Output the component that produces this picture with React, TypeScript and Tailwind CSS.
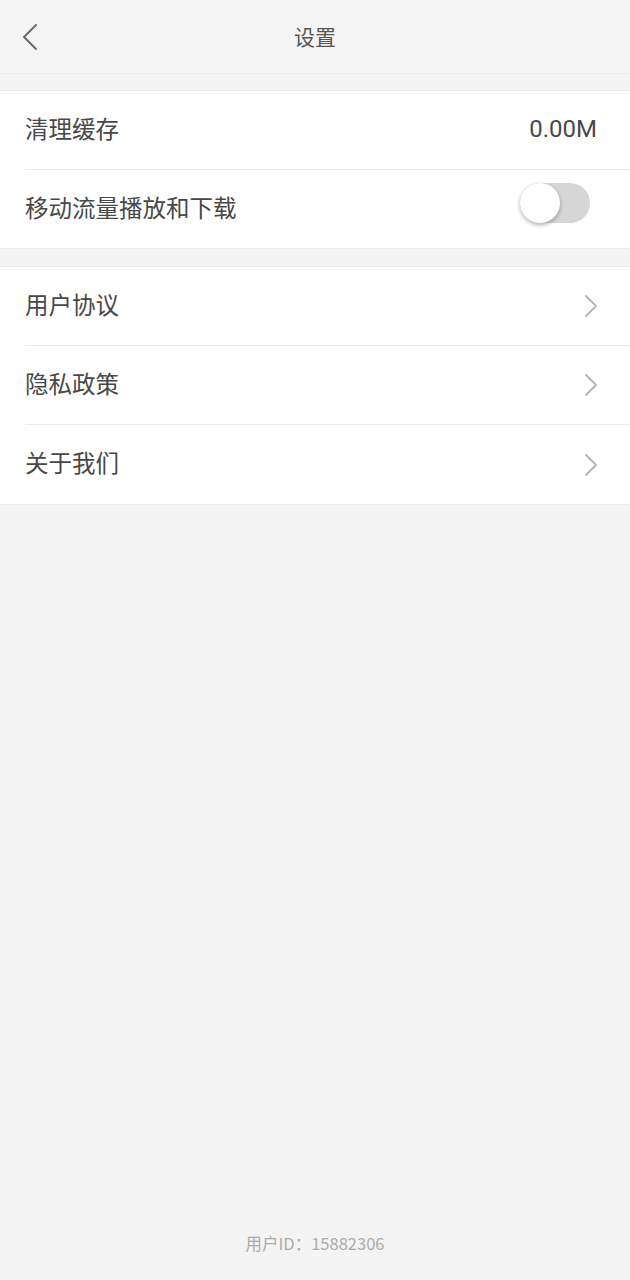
import { useState } from 'react'

const font = { fontFamily: '"Noto Sans CJK SC", Roboto, "Noto Sans", sans-serif' }

function Chevron() {
  return (
    <svg width="14" height="24" viewBox="0 0 14 24" fill="none">
      <path d="M2 2 L12 12 L2 22" stroke="#b5b5b5" strokeWidth="1.8" strokeLinecap="round" strokeLinejoin="round" />
    </svg>
  )
}

function LinkRow({ label, last }: { label: string; last?: boolean }) {
  return (
    <div className="pl-[25px]">
      <div className={`flex h-[79px] items-center justify-between pr-[32px] ${last ? '' : 'border-b border-[#ebebeb]'}`}>
        <span className="-mt-[3px] text-[23.5px] text-[#484848]">{label}</span>
        <Chevron />
      </div>
    </div>
  )
}

export default function App() {
  const [mobileData, setMobileData] = useState(false)

  return (
    <div className="flex min-h-screen flex-col bg-[#f4f4f4]" style={font}>
      {/* Header */}
      <div className="relative flex h-[74px] items-center justify-center border-b border-[#ebebeb] bg-[#f5f5f5]">
        <button className="absolute left-[20px] top-[23px]">
          <svg width="20" height="28" viewBox="0 0 20 28" fill="none">
            <path d="M16 2 L4 14 L16 26" stroke="#6a6a6a" strokeWidth="2" strokeLinecap="round" strokeLinejoin="round" />
          </svg>
        </button>
        <h1 className="text-[21px] text-[#555]">设置</h1>
      </div>

      {/* Cache + mobile data */}
      <div className="mt-[16px] border-y border-[#ebebeb] bg-white">
        <div className="pl-[25px]">
          <div className="flex h-[79px] items-center justify-between border-b border-[#ebebeb] pr-[33px]">
            <span className="-mt-[3px] text-[23.5px] text-[#484848]">清理缓存</span>
            <span className="-mt-[3px] text-[24px] text-[#484848]" style={{ fontFamily: 'Roboto, sans-serif' }}>0.00M</span>
          </div>
          <div className="flex h-[78px] items-center justify-between pr-[40px]">
            <span className="-mt-[3px] text-[23.5px] text-[#484848]">移动流量播放和下载</span>
            <button
              onClick={() => setMobileData(!mobileData)}
              className={`relative -mt-[12px] h-[40px] w-[70px] rounded-full ${mobileData ? 'bg-[#ff6a3c]' : 'bg-[#d6d6d6]'}`}
            >
              <span
                className={`absolute top-0 h-[40px] w-[40px] rounded-full bg-white shadow-[0_2px_4px_rgba(0,0,0,0.3)] ${mobileData ? 'left-[30px]' : 'left-0'}`}
              />
            </button>
          </div>
        </div>
      </div>

      {/* Links */}
      <div className="mt-[17px] border-y border-[#ebebeb] bg-white">
        <LinkRow label="用户协议" />
        <LinkRow label="隐私政策" />
        <LinkRow label="关于我们" last />
      </div>

      <div className="flex-1" />

      <div className="pb-[24px] text-center text-[16.5px] text-[#ababab]">用户ID：15882306</div>
    </div>
  )
}
